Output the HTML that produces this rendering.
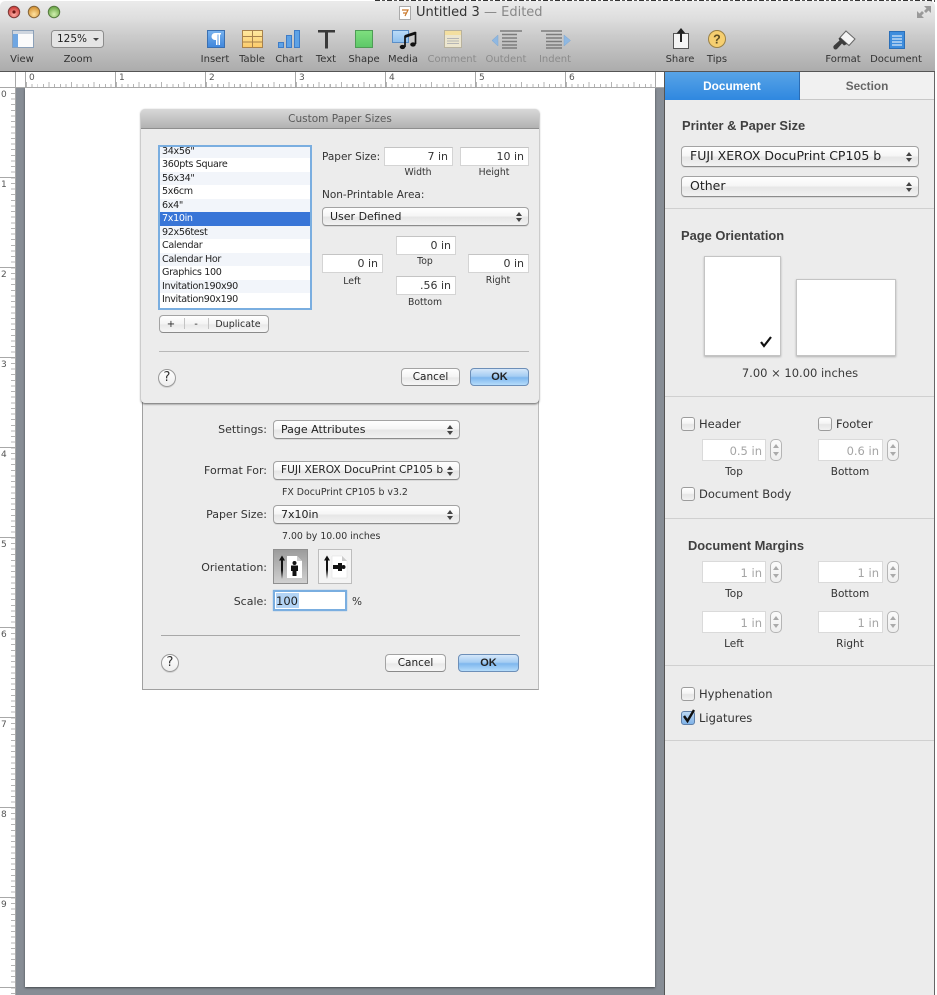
<!DOCTYPE html>
<html><head><meta charset="utf-8"><style>
*{box-sizing:border-box}
html,body{margin:0;padding:0}
body{width:937px;height:995px;position:relative;overflow:hidden;background:#fff;font-family:"DejaVu Sans","Liberation Sans",sans-serif;font-size:10px;color:#2b2b2b}
.a{position:absolute}
.t{position:absolute;white-space:nowrap;line-height:14px;height:14px}
.c{transform:translateX(-50%)}
.r{transform:translateX(-100%)}
.lb{font-size:10px;color:#333}
.tb{font-size:10px;color:#333;top:53px}
.dim{color:#8b8b8b}
.b{font-weight:bold;font-size:12.9px;color:#404040;font-family:"Liberation Sans",sans-serif}
.hr{position:absolute;height:1px;background:#d0d0d0}
.in{position:absolute;background:#fff;border:1px solid #d4d4d4;border-top-color:#c4c4c4;text-align:right;padding-right:4px;white-space:nowrap;font-size:11px;color:#333}
.dis{color:#a5a5a5;font-size:11.5px;line-height:22px;padding-right:3px;border-color:#dadada}
.sel{position:absolute;border:1px solid #a3a3a3;border-bottom-color:#8c8c8c;border-radius:4px;background:linear-gradient(#fff,#f6f6f6 45%,#e6e6e6 55%,#f2f2f2);white-space:nowrap;padding-left:7px;color:#222;font-size:11px;box-shadow:0 1px 0 rgba(0,0,0,.08)}
.sel:before,.sel:after{content:"";position:absolute;right:6px;border-left:3px solid transparent;border-right:3px solid transparent}
.sel:before{top:calc(50% - 5px);border-bottom:4px solid #444}
.sel:after{top:calc(50% + 1px);border-top:4px solid #444}
.btn{position:absolute;border:1px solid #a3a3a3;border-bottom-color:#8a8a8a;border-radius:4px;background:linear-gradient(#fff,#f4f4f4 50%,#e9e9e9 55%,#f6f6f6);text-align:center;font-size:10.5px;color:#222;line-height:17px}
.ok{border-color:#6d8fb8;background:linear-gradient(#d5e7fa,#a5cdf3 45%,#7fb7ee 55%,#b5dcfb)}
.help{position:absolute;width:18px;height:18px;border-radius:50%;border:1px solid #9a9a9a;background:linear-gradient(#fff,#eee);text-align:center;font-size:13px;line-height:16px;color:#333;box-shadow:0 1px 0 rgba(0,0,0,.1)}
.cb{position:absolute;width:14px;height:14px;border:1px solid #9c9c9c;border-radius:3px;background:linear-gradient(#fff,#f4f4f4 45%,#e6e6e6 55%,#f2f2f2)}
.st{position:absolute;width:12px;height:22px;border:1px solid #b5b5b5;border-radius:5px;background:linear-gradient(#fbfbfb,#eee)}
.st:before,.st:after{content:"";position:absolute;left:2px;border-left:3px solid transparent;border-right:3px solid transparent}
.st:before{top:4px;border-bottom:4px solid #aaa}
.st:after{bottom:4px;border-top:4px solid #aaa}
.row{position:absolute;left:0;width:150px;height:13.45px;line-height:13px;padding-left:2px;font-size:9.6px;letter-spacing:-.35px;color:#222;white-space:nowrap}
.sm{font-size:9.3px;color:#333}
.sb{font-size:10.5px;color:#333}
.cb+.t{font-size:11.5px;color:#333}
</style></head><body>

<!-- stray background above window -->
<div class="a" style="left:375px;top:0;width:560px;height:2px;background:repeating-linear-gradient(90deg,#333 0 5px,#fff 5px 7px,#555 7px 10px,#fff 10px 12px)"></div>
<div class="a" style="left:935px;top:0;width:2px;height:995px;background:#fff"></div>

<!-- title bar + toolbar -->
<div class="a" style="left:0;top:1px;width:935px;height:71px;background:linear-gradient(#ebebeb,#dedede 25%,#cbcbcb 50%,#adadad 98%);border-bottom:1px solid #555;border-radius:5px 5px 0 0"></div>

<svg class="a" style="left:0;top:0" width="937" height="72" viewBox="0 0 937 72">
<defs>
<radialGradient id="rd" cx=".5" cy=".7" r=".7"><stop offset="0" stop-color="#ffb0a8"/><stop offset="1" stop-color="#c8322e"/></radialGradient>
<radialGradient id="yl" cx=".5" cy=".7" r=".7"><stop offset="0" stop-color="#ffe2a0"/><stop offset="1" stop-color="#d08a28"/></radialGradient>
<radialGradient id="gr" cx=".5" cy=".7" r=".7"><stop offset="0" stop-color="#d2f0b0"/><stop offset="1" stop-color="#62a03e"/></radialGradient>
<linearGradient id="bl" x1="0" y1="0" x2="0" y2="1"><stop offset="0" stop-color="#78b2ee"/><stop offset="1" stop-color="#3f86dc"/></linearGradient>
<linearGradient id="gn" x1="0" y1="0" x2="0" y2="1"><stop offset="0" stop-color="#7fe07f"/><stop offset="1" stop-color="#5dc768"/></linearGradient>
<linearGradient id="lb" x1="0" y1="0" x2="0" y2="1"><stop offset="0" stop-color="#bcdcf8"/><stop offset="1" stop-color="#8fc0ee"/></linearGradient>
<linearGradient id="yb" x1="0" y1="0" x2="0" y2="1"><stop offset="0" stop-color="#ffe9a0"/><stop offset="1" stop-color="#fbcb6a"/></linearGradient>
</defs>
<!-- traffic lights -->
<circle cx="14" cy="12" r="5.7" fill="url(#rd)" stroke="#7d3a38"/><circle cx="14" cy="12" r="1.6" fill="#6b1512"/>
<circle cx="34" cy="12" r="5.7" fill="url(#yl)" stroke="#86663a"/>
<circle cx="54" cy="12" r="5.7" fill="url(#gr)" stroke="#557a40"/>
<!-- doc icon -->
<rect x="399.5" y="6.5" width="11" height="13" fill="#fff" stroke="#aaa"/>
<path d="M402 10h6l-3 6M403 13h3" stroke="#c9792c" stroke-width="1.2" fill="none"/>
<!-- view -->
<rect x="12.5" y="30.5" width="21" height="17" fill="#fbfbfb" stroke="#8ba0b8"/>
<rect x="13" y="31" width="20" height="3" fill="#cfd6df"/>
<rect x="13" y="34" width="5" height="13" fill="#6fa6e2"/>
<!-- zoom -->
<rect x="51.5" y="30.5" width="52" height="17" rx="3" fill="#e4e4e4" stroke="#8c8c8c"/>
<path d="M93 38h6l-3 3z" fill="#444"/>
<!-- insert -->
<rect x="207.5" y="30.5" width="17" height="17" fill="url(#bl)" stroke="#3a6fb0"/>
<path d="M218.5 33h-3.500a3.500 3.500 0 0 0 0 7h1v5h1.500V34.500h1v10.500h1.500V34.500h1V33z" fill="#fff"/>
<!-- table -->
<rect x="242.500" y="30.500" width="20" height="17" fill="url(#yb)" stroke="#a8824c"/>
<path d="M242.500 36.500h20M242.500 42h20M252.500 30.500v17" stroke="#a8824c"/>
<!-- chart -->
<g stroke="#3f7cc6"><rect x="278.500" y="42.500" width="5" height="5" fill="#5ea2e6"/><rect x="286.500" y="35.500" width="5" height="12" fill="#5ea2e6"/><rect x="294.500" y="30.500" width="5" height="17" fill="#5ea2e6"/></g>
<!-- text -->
<path d="M318 30h17v2.500h-7v16h-3v-16h-7z" fill="#3a3a3a"/>
<!-- shape -->
<rect x="355.500" y="30.500" width="17" height="17" fill="url(#gn)" stroke="#4e9c55"/>
<!-- media -->
<rect x="392.500" y="30.500" width="16" height="12" fill="url(#lb)" stroke="#5b8fc8"/>
<path d="M415.500 32V44" stroke="#111" stroke-width="1.700" fill="none"/><path d="M405 35.500V47" stroke="#111" stroke-width="1.700"/><path d="M405 35l10.500-3.500v3L405 38z" fill="#111"/>
<ellipse cx="402.500" cy="47" rx="2.800" ry="2.100" fill="#111"/><ellipse cx="413" cy="44.500" rx="2.800" ry="2.100" fill="#111"/>
<!-- comment -->
<rect x="444.500" y="30.500" width="17" height="17" fill="#ece6cf" stroke="#b8b29e"/>
<rect x="445" y="31" width="16" height="4" fill="#f3dfa0"/>
<path d="M447 38.500h12M447 41h12M447 43.500h12" stroke="#b5b5b5"/>
<!-- outdent -->
<path d="M498 35v11l-6-5.500z" fill="#8fb8e2" stroke="#7fa6cf" stroke-width=".5"/>
<path d="M500 31h22M502 34.500h15M502 38h15M502 41.500h15M502 45h15M502 48h15" stroke="#7c7c7c" stroke-width="1.500" fill="none"/>
<!-- indent -->
<path d="M564 35v11l6.500-5.500z" fill="#8fb8e2" stroke="#7fa6cf" stroke-width=".5"/>
<path d="M541 31h21M546 34.500h16M546 38h16M546 41.500h16M546 45h16M546 48h16" stroke="#7c7c7c" stroke-width="1.500" fill="none"/>
<!-- share -->
<rect x="673.500" y="33.500" width="15" height="15" fill="#f4f4f4" stroke="#555"/>
<path d="M681 42V31" stroke="#222" stroke-width="2"/><path d="M676.500 33.500l4.500-5.500 4.500 5.500z" fill="#222"/>
<!-- tips -->
<circle cx="717" cy="39" r="8.500" fill="#f6cf70" stroke="#9b8144"/>
<text x="717" y="43.500" font-family="Liberation Sans" font-size="12.500" font-weight="bold" text-anchor="middle" fill="#5d4d22">?</text>
<!-- format brush -->
<path d="M846 31l9 8-6 6.500-9-8z" fill="#f4f4f4" stroke="#666"/>
<path d="M840 37.500l7 6.500-3 1.500-2-2-5 5.500c-1.300 1-3 .5-3.500-1s0-2 1-3l5-4.500-1-2z" fill="#3d3d3d"/>
<!-- document -->
<rect x="889.500" y="31.500" width="15" height="17" fill="#3e8ddd" stroke="#2b6fb8"/>
<path d="M892 36h10M892 39h10M892 42h10M892 45h10" stroke="#fff"/>
<!-- fullscreen -->
<path d="M924 6h7v7l-2.500-2.500-2.500 2.500-2-2 2.500-2.500zM924 18h-7v-7l2.500 2.500 2.500-2.500 2 2-2.500 2.500z" fill="#9a9a9a"/>
</svg>

<div class="t" style="left:416px;top:6px;font-size:13px;color:#333">Untitled 3</div>
<div class="t" style="left:484px;top:6px;font-size:13px;color:#888">— Edited</div>
<div class="t" style="left:57px;top:32px;font-size:10.5px;color:#222">125%</div>

<div class="t tb c" style="left:22px">View</div>
<div class="t tb c" style="left:78px">Zoom</div>
<div class="t tb c" style="left:215px">Insert</div>
<div class="t tb c" style="left:252px">Table</div>
<div class="t tb c" style="left:289px">Chart</div>
<div class="t tb c" style="left:326px">Text</div>
<div class="t tb c" style="left:364px">Shape</div>
<div class="t tb c" style="left:403px">Media</div>
<div class="t tb c dim" style="left:452px">Comment</div>
<div class="t tb c dim" style="left:506px">Outdent</div>
<div class="t tb c dim" style="left:555px">Indent</div>
<div class="t tb c" style="left:680px">Share</div>
<div class="t tb c" style="left:717px">Tips</div>
<div class="t tb c" style="left:843px">Format</div>
<div class="t tb c" style="left:896px">Document</div>

<!-- gray canvas -->
<div class="a" style="left:16px;top:88px;width:648px;height:907px;background:#878d95"></div>
<div class="a" style="left:664px;top:72px;width:1px;height:923px;background:#555"></div>
<!-- page -->
<div class="a" style="left:25px;top:88px;width:630px;height:899px;background:#fff;box-shadow:0 1px 2px rgba(0,0,0,.5)"></div>

<!-- h ruler -->
<div class="a" style="left:0;top:72px;width:664px;height:16px;background:#fff;border-bottom:1px solid #a8a8a8"></div>
<div class="a" style="left:26px;top:84px;width:630px;height:3px;background:repeating-linear-gradient(90deg,#b4b4b4 0 1px,transparent 1px 5.625px)"></div>
<div class="a" style="left:26px;top:82px;width:630px;height:5px;background:repeating-linear-gradient(90deg,#b4b4b4 0 1px,transparent 1px 22.5px)"></div>
<div class="a" style="left:25px;top:72px;width:631px;height:15px;background:repeating-linear-gradient(90deg,#a8a8a8 0 1px,transparent 1px 90px)"></div>
<div class="a" style="left:15px;top:72px;width:1px;height:16px;background:#a8a8a8"></div>
<div class="t" style="left:29px;top:71px;font-size:9px;color:#555">0</div>
<div class="t" style="left:119px;top:71px;font-size:9px;color:#555">1</div>
<div class="t" style="left:209px;top:71px;font-size:9px;color:#555">2</div>
<div class="t" style="left:299px;top:71px;font-size:9px;color:#555">3</div>
<div class="t" style="left:389px;top:71px;font-size:9px;color:#555">4</div>
<div class="t" style="left:479px;top:71px;font-size:9px;color:#555">5</div>
<div class="t" style="left:569px;top:71px;font-size:9px;color:#555">6</div>

<!-- v ruler -->
<div class="a" style="left:0;top:88px;width:15px;height:907px;background:#fff"></div>
<div class="a" style="left:15px;top:72px;width:1px;height:923px;background:#a8a8a8"></div>
<div class="a" style="left:11px;top:93px;width:4px;height:902px;background:repeating-linear-gradient(180deg,#b4b4b4 0 1px,transparent 1px 5.625px)"></div>
<div class="a" style="left:0;top:177px;width:15px;height:818px;background:repeating-linear-gradient(180deg,#a8a8a8 0 1px,transparent 1px 90px)"></div>
<div class="t" style="left:1px;top:88px;font-size:9px;color:#555">0</div>
<div class="t" style="left:1px;top:178px;font-size:9px;color:#555">1</div>
<div class="t" style="left:1px;top:268px;font-size:9px;color:#555">2</div>
<div class="t" style="left:1px;top:358px;font-size:9px;color:#555">3</div>
<div class="t" style="left:1px;top:448px;font-size:9px;color:#555">4</div>
<div class="t" style="left:1px;top:538px;font-size:9px;color:#555">5</div>
<div class="t" style="left:1px;top:628px;font-size:9px;color:#555">6</div>
<div class="t" style="left:1px;top:718px;font-size:9px;color:#555">7</div>
<div class="t" style="left:1px;top:808px;font-size:9px;color:#555">8</div>
<div class="t" style="left:1px;top:898px;font-size:9px;color:#555">9</div>

<!-- dialog 2 -->
<div class="a" style="left:142px;top:395px;width:397px;height:295px;background:#ececec;border:1px solid #a0a0a0;border-right-color:#bbb"></div>
<div class="t r lb" style="left:267px;top:423px;font-size:11px">Settings:</div>
<div class="sel" style="left:273px;top:420px;width:187px;height:19px;line-height:17px">Page Attributes</div>
<div class="t r lb" style="left:267px;top:464px;font-size:11px">Format For:</div>
<div class="sel" style="left:273px;top:461px;width:187px;height:19px;line-height:17px;font-size:10.6px">FUJI XEROX DocuPrint CP105 b</div>
<div class="t" style="left:282px;top:486px;font-size:9.4px;color:#333">FX DocuPrint CP105 b v3.2</div>
<div class="t r lb" style="left:267px;top:508px;font-size:11px">Paper Size:</div>
<div class="sel" style="left:273px;top:505px;width:187px;height:19px;line-height:17px">7x10in</div>
<div class="t" style="left:282px;top:530px;font-size:9.4px;color:#333">7.00 by 10.00 inches</div>
<div class="t r lb" style="left:267px;top:561px;font-size:11px">Orientation:</div>
<div class="a" style="left:273px;top:549px;width:35px;height:35px;border:1px solid #8f8f8f;background:linear-gradient(#9c9c9c,#d0d0d0)"></div>
<div class="a" style="left:318px;top:549px;width:34px;height:35px;border:1px solid #bdbdbd;background:#f4f4f4"></div>
<svg class="a" style="left:273px;top:549px" width="80" height="35" viewBox="0 0 80 35">
<defs><linearGradient id="fa" x1="0" y1="0" x2="0" y2="1"><stop offset="0" stop-color="#111"/><stop offset=".55" stop-color="#111"/><stop offset="1" stop-color="#111" stop-opacity="0"/></linearGradient></defs>
<rect x="8" y="10" width="2" height="20" fill="url(#fa)"/><path d="M6 11.500l3-5 3 5z" fill="#111"/>
<path d="M14 7h10l5 5v17H14z" fill="#fff"/><path d="M24 7v5h5z" fill="#ccc"/>
<circle cx="21.500" cy="14" r="2" fill="#111"/><path d="M18 16.500h7v5.500h-1.500v5h-4v-5H18z" fill="#111"/>
<rect x="53" y="10" width="2" height="20" fill="url(#fa)"/><path d="M51 11.500l3-5 3 5z" fill="#111"/>
<path d="M59 7h10l5 5v17H59z" fill="#fff" stroke="#ddd" stroke-width=".5"/><path d="M69 7v5h5z" fill="#ccc"/>
<path d="M60 16h5v-2h4v8h-4v-2h-5z" fill="#111"/><circle cx="70.500" cy="18" r="2" fill="#111"/>
</svg>
<div class="t r lb" style="left:267px;top:595px;font-size:11px">Scale:</div>
<div class="a" style="left:273px;top:590px;width:74px;height:21px;background:#fff;border:2px solid #7aaee0;box-shadow:0 0 1px #7aaee0"></div>
<div class="a" style="left:276px;top:593px;width:23px;height:15px;background:#b3d4f5"></div>
<div class="t" style="left:276px;top:594px;font-size:11.5px;color:#222">100</div>
<div class="t" style="left:352px;top:595px;font-size:10.5px;color:#333">%</div>
<div class="hr" style="left:161px;top:635px;width:359px;background:#a8a8a8"></div>
<div class="help" style="left:161px;top:654px">?</div>
<div class="btn" style="left:385px;top:654px;width:61px;height:18px">Cancel</div>
<div class="btn ok" style="left:458px;top:654px;width:61px;height:18px;font-weight:bold;font-family:'Liberation Sans',sans-serif;font-size:11px">OK</div>

<!-- dialog 1 -->
<div class="a" style="left:141px;top:109px;width:398px;height:294px;background:#ececec;border-radius:4px;box-shadow:0 1px 2px rgba(0,0,0,.6)"></div>
<div class="a" style="left:141px;top:109px;width:398px;height:20px;background:linear-gradient(#d8d8d8,#b2b2b2);border-bottom:1px solid #8e8e8e;border-radius:4px 4px 0 0"></div>
<div class="t c" style="left:340px;top:112px;font-size:10.5px;line-height:15px;color:#5a5a5a">Custom Paper Sizes</div>

<div class="a" style="left:158px;top:145px;width:154px;height:165px;background:#fff;border:2px solid #7aaee0;overflow:hidden">
<div class="a" style="left:0;top:-1px;width:150px;height:163px">
<div class="row" style="top:-1px;background:#f2f5fa">34x56"</div>
<div class="row" style="top:12.45px">360pts Square</div>
<div class="row" style="top:25.9px;background:#f2f5fa">56x34"</div>
<div class="row" style="top:39.35px">5x6cm</div>
<div class="row" style="top:52.8px;background:#f2f5fa">6x4"</div>
<div class="row" style="top:66.25px;background:#3875d7;color:#fff">7x10in</div>
<div class="row" style="top:79.7px;background:#f2f5fa">92x56test</div>
<div class="row" style="top:93.15px">Calendar</div>
<div class="row" style="top:106.6px;background:#f2f5fa">Calendar Hor</div>
<div class="row" style="top:120.05px">Graphics 100</div>
<div class="row" style="top:133.5px;background:#f2f5fa">Invitation190x90</div>
<div class="row" style="top:146.95px">Invitation90x190</div>
</div></div>

<div class="btn" style="left:159px;top:315px;width:110px;height:18px"></div>
<div class="a" style="left:184px;top:318px;width:1px;height:11px;background:#c4c4c4"></div>
<div class="a" style="left:208px;top:318px;width:1px;height:11px;background:#c4c4c4"></div>
<div class="t c" style="left:171px;top:318px;font-size:10px">+</div>
<div class="t c" style="left:196px;top:318px;font-size:10px">-</div>
<div class="t c" style="left:238px;top:318px;font-size:9.5px">Duplicate</div>

<div class="t" style="left:322px;top:150px;font-size:10.5px;color:#333">Paper Size:</div>
<div class="in" style="left:384px;top:147px;width:69px;height:19px;line-height:18px">7 in</div>
<div class="in" style="left:460px;top:147px;width:69px;height:19px;line-height:18px">10 in</div>
<div class="t c sm" style="left:418px;top:166px">Width</div>
<div class="t c sm" style="left:494px;top:166px">Height</div>
<div class="t" style="left:322px;top:188px;font-size:10.5px;color:#333">Non-Printable Area:</div>
<div class="sel" style="left:322px;top:207px;width:207px;height:19px;line-height:17px">User Defined</div>
<div class="in" style="left:396px;top:236px;width:60px;height:19px;line-height:18px">0 in</div>
<div class="t c sm" style="left:425px;top:255px">Top</div>
<div class="in" style="left:322px;top:254px;width:61px;height:19px;line-height:18px">0 in</div>
<div class="t c sm" style="left:352px;top:275px">Left</div>
<div class="in" style="left:468px;top:254px;width:61px;height:19px;line-height:18px">0 in</div>
<div class="t c sm" style="left:498px;top:274px">Right</div>
<div class="in" style="left:396px;top:276px;width:60px;height:19px;line-height:18px">.56 in</div>
<div class="t c sm" style="left:425px;top:296px">Bottom</div>
<div class="hr" style="left:159px;top:351px;width:370px;background:#b8b8b8"></div>
<div class="help" style="left:158px;top:369px">?</div>
<div class="btn" style="left:401px;top:368px;width:59px;height:18px">Cancel</div>
<div class="btn ok" style="left:470px;top:368px;width:59px;height:18px;font-weight:bold;font-family:'Liberation Sans',sans-serif;font-size:11px">OK</div>

<!-- sidebar -->
<div class="a" style="left:665px;top:72px;width:270px;height:923px;background:#ececec;border-right:1px solid #666"></div>
<div class="a" style="left:665px;top:72px;width:135px;height:28px;background:linear-gradient(#58a4e6,#2f88e0);border-right:1px solid #2a6cb4"></div>
<div class="a" style="left:800px;top:72px;width:134px;height:28px;background:#f1f1f1;border-bottom:1px solid #c8c8c8"></div>
<div class="t c" style="left:732px;top:79px;line-height:15px;font-weight:bold;font-size:11.8px;color:#fff;font-family:'Liberation Sans',sans-serif">Document</div>
<div class="t c" style="left:867px;top:79px;line-height:15px;font-weight:bold;font-size:11.8px;color:#666;font-family:'Liberation Sans',sans-serif">Section</div>

<div class="t b" style="left:682px;top:119px">Printer &amp; Paper Size</div>
<div class="sel" style="left:681px;top:146px;width:238px;height:21px;line-height:18px;font-size:12.5px;padding-left:8px">FUJI XEROX DocuPrint CP105 b</div>
<div class="sel" style="left:681px;top:176px;width:238px;height:21px;line-height:18px;font-size:12.5px;padding-left:8px">Other</div>
<div class="hr" style="left:665px;top:208px;width:269px"></div>
<div class="t b" style="left:681px;top:229px">Page Orientation</div>
<div class="a" style="left:704px;top:256px;width:77px;height:100px;background:#fff;border:1px solid #c4c4c4;box-shadow:0 1px 2px rgba(0,0,0,.25)"></div>
<div class="a" style="left:796px;top:279px;width:100px;height:77px;background:#fff;border:1px solid #c4c4c4;box-shadow:0 1px 2px rgba(0,0,0,.25)"></div>
<svg class="a" style="left:759px;top:335px" width="16" height="14" viewBox="0 0 16 14"><path d="M2 7l3 4 7-9" stroke="#111" stroke-width="2.200" fill="none"/></svg>
<div class="t c" style="left:800px;top:366px;font-size:11.5px;color:#3a3a3a">7.00 × 10.00 inches</div>
<div class="hr" style="left:665px;top:396px;width:269px"></div>

<div class="cb" style="left:681px;top:417px"></div>
<div class="t" style="left:699px;top:417px">Header</div>
<div class="cb" style="left:818px;top:417px"></div>
<div class="t" style="left:836px;top:417px">Footer</div>
<div class="in dis" style="left:702px;top:439px;width:64px;height:22px">0.5 in</div><div class="st" style="left:770px;top:439px"></div>
<div class="in dis" style="left:818px;top:439px;width:65px;height:22px">0.6 in</div><div class="st" style="left:887px;top:439px"></div>
<div class="t c sb" style="left:734px;top:465px">Top</div>
<div class="t c sb" style="left:850px;top:465px">Bottom</div>
<div class="cb" style="left:681px;top:487px"></div>
<div class="t" style="left:699px;top:487px">Document Body</div>
<div class="hr" style="left:665px;top:518px;width:269px"></div>

<div class="t b" style="left:688px;top:539px">Document Margins</div>
<div class="in dis" style="left:702px;top:561px;width:64px;height:22px">1 in</div><div class="st" style="left:770px;top:561px"></div>
<div class="in dis" style="left:818px;top:561px;width:65px;height:22px">1 in</div><div class="st" style="left:887px;top:561px"></div>
<div class="t c sb" style="left:734px;top:587px">Top</div>
<div class="t c sb" style="left:850px;top:587px">Bottom</div>
<div class="in dis" style="left:702px;top:611px;width:64px;height:22px">1 in</div><div class="st" style="left:770px;top:611px"></div>
<div class="in dis" style="left:818px;top:611px;width:65px;height:22px">1 in</div><div class="st" style="left:887px;top:611px"></div>
<div class="t c sb" style="left:734px;top:637px">Left</div>
<div class="t c sb" style="left:850px;top:637px">Right</div>
<div class="hr" style="left:665px;top:665px;width:269px"></div>

<div class="cb" style="left:681px;top:687px"></div>
<div class="t" style="left:699px;top:687px">Hyphenation</div>
<div class="cb" style="left:681px;top:711px;background:linear-gradient(#bcd8f4,#7fb2e8);border-color:#5f7fa8"></div>
<div class="t" style="left:699px;top:711px">Ligatures</div>
<svg class="a" style="left:680px;top:707px" width="18" height="18" viewBox="0 0 18 18"><path d="M4 9l3.500 5L14 3" stroke="#111" stroke-width="2.400" fill="none"/></svg>
<div class="hr" style="left:665px;top:740px;width:269px"></div>
</body></html>
